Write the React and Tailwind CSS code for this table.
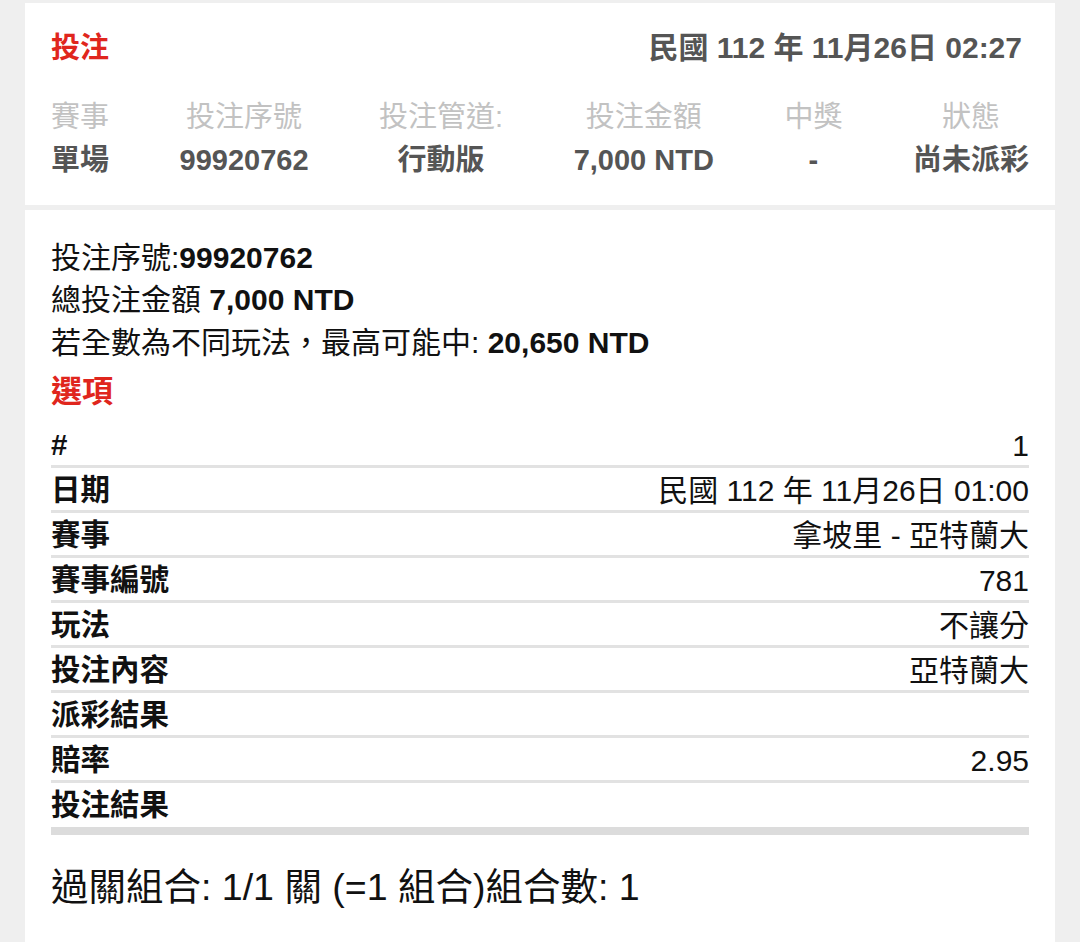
import React from 'react';

const FONT = { fontFamily: '"Liberation Sans", "Noto Sans CJK TC", sans-serif' };

const summary = [
  { label: '賽事', value: '單場' },
  { label: '投注序號', value: '99920762' },
  { label: '投注管道:', value: '行動版' },
  { label: '投注金額', value: '7,000 NTD' },
  { label: '中獎', value: '-' },
  { label: '狀態', value: '尚未派彩' },
];

const rows = [
  ['#', '1'],
  ['日期', '民國 112 年 11月26日 01:00'],
  ['賽事', '拿坡里 - 亞特蘭大'],
  ['賽事編號', '781'],
  ['玩法', '不讓分'],
  ['投注內容', '亞特蘭大'],
  ['派彩結果', ''],
  ['賠率', '2.95'],
  ['投注結果', ''],
];

export default function App() {
  return (
    <div style={FONT} className="min-h-[942px] w-[1080px] bg-[#efefef] pt-[3px]">
      <div className="mx-[25px] flex flex-col">
        {/* 上方摘要卡 */}
        <div className="bg-white px-[26px] pt-[25px] pb-[23px]">
          <div className="flex items-center justify-between leading-[40px]">
            <span className="text-[29px] font-bold text-[#e0261d]">投注</span>
            <span className="mr-[7px] text-[30px] font-bold text-[#555555]">民國 112 年 11月26日 02:27</span>
          </div>
          <div className="mt-[28px] flex justify-between">
            {summary.map((col) => (
              <div key={col.label} className="flex flex-col items-center text-center">
                <span className="text-[29px] leading-[42px] text-[#c2c2c2]">{col.label}</span>
                <span className="text-[29px] font-bold leading-[44px] text-[#555555]">{col.value}</span>
              </div>
            ))}
          </div>
        </div>

        {/* 詳細內容 */}
        <div className="mt-[5px] bg-white px-[26px] pt-[27px] pb-[60px] text-[#111111]">
          <div className="text-[30px] leading-[42px]">
            投注序號:<span className="font-bold">99920762</span>
          </div>
          <div className="text-[30px] leading-[42px]">
            總投注金額 <span className="font-bold">7,000 NTD</span>
          </div>
          <div className="text-[30px] leading-[43px]">
            若全數為不同玩法，最高可能中: <span className="font-bold">20,650 NTD</span>
          </div>
          <div className="mt-[7px] text-[31px] font-bold leading-[42px] text-[#e0261d]">選項</div>

          <div className="mt-[10px]">
            {rows.map(([k, v], i) => (
              <div
                key={k + i}
                className={
                  i < rows.length - 1
                    ? 'flex h-[45px] items-center justify-between border-b-[3px] border-[#e2e2e2] pt-[3px]'
                    : 'flex h-[42px] items-center justify-between pt-[3px]'
                }
              >
                <span className="text-[29.5px] font-bold">{k}</span>
                <span className="text-[30px]">{v}</span>
              </div>
            ))}
            <div className="mt-[2px] h-[8px] bg-[#dcdcdc]" />
          </div>

          <div className="mt-[30px] text-[37.5px] leading-[44px]">過關組合: 1/1 關 (=1 組合)組合數: 1</div>
        </div>
      </div>
    </div>
  );
}
